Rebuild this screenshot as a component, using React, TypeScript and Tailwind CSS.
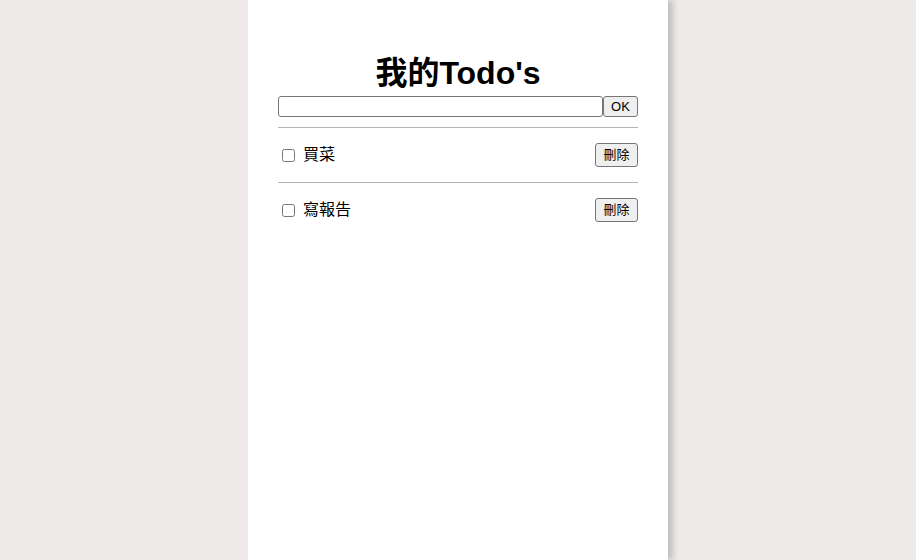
import { useState } from "react";

type Todo = { id: number; text: string; done: boolean };

const FONT = "font-['Helvetica','Liberation_Sans','Noto_Sans_CJK_TC',sans-serif]";

export default function App() {
  const [todos, setTodos] = useState<Todo[]>([
    { id: 1, text: "買菜", done: false },
    { id: 2, text: "寫報告", done: false },
  ]);
  const [input, setInput] = useState("");

  function add() {
    if (!input.trim()) return;
    setTodos([...todos, { id: Date.now(), text: input, done: false }]);
    setInput("");
  }

  return (
    <div className={`min-h-screen bg-[#eeeaea] ${FONT}`}>
      <div className="mx-auto w-[420px] min-h-screen bg-white px-[30px] pt-[54px] shadow-[5px_0_6px_rgba(0,0,0,0.18)]">
        <h1 className="text-center text-[32px] font-bold leading-[38px] text-black">我的Todo's</h1>
        <div className="mt-[4px] flex">
          <input
            value={input}
            onChange={(e) => setInput(e.target.value)}
            className="h-[21px] w-[325px] rounded-[3px] border border-[#767676] px-1 text-[13px] outline-none"
          />
          <button
            onClick={add}
            className="h-[21px] w-[35px] rounded-[3px] border border-[#767676] bg-[#efefef] text-[13px] text-black"
          >
            OK
          </button>
        </div>
        <ul className="mt-[10px]">
          {todos.map((t) => (
            <li key={t.id} className="border-t border-[#b5b5b5] flex items-center justify-between pt-[15px] pb-[15px]">
              <label className="flex items-center text-[16px] text-black">
                <input
                  type="checkbox"
                  checked={t.done}
                  onChange={() => setTodos(todos.map((x) => (x.id === t.id ? { ...x, done: !x.done } : x)))}
                  className="ml-[4px] mr-[8px] h-[13px] w-[13px]"
                />
                {t.text}
              </label>
              <button
                onClick={() => setTodos(todos.filter((x) => x.id !== t.id))}
                className="h-[24px] w-[43px] rounded-[3px] border border-[#767676] bg-[#efefef] text-[13px] text-black"
              >
                刪除
              </button>
            </li>
          ))}
        </ul>
      </div>
    </div>
  );
}
